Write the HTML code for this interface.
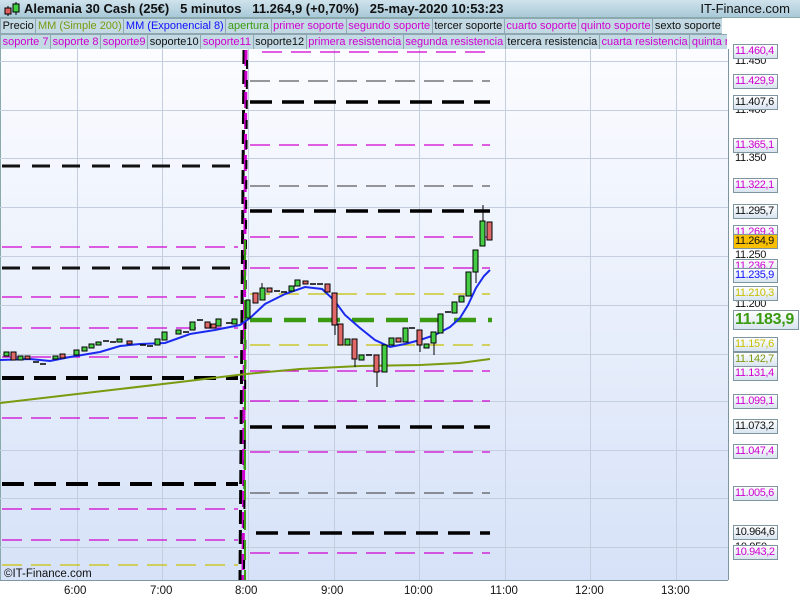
<!DOCTYPE html>
<html><head><meta charset="utf-8">
<style>
*{margin:0;padding:0;box-sizing:border-box}
body{width:800px;height:600px;overflow:hidden;background:#fff;font-family:"Liberation Sans",sans-serif;position:relative}
#hdr{position:absolute;left:0;top:0;width:800px;height:18px;background:linear-gradient(#cfe3ec,#a9c9d8);border-bottom:1px solid #8aa;font-weight:bold;font-size:13px;color:#111;line-height:18px}
.row{position:absolute;left:0;height:16px;display:flex;font-size:11px;line-height:14px;white-space:nowrap;overflow:hidden}
.row span{background:#c3d9e3;border:1px solid #8fa7b0;padding:0 1.6px;margin-right:-1px;height:16px}
.m{color:#d000d0}.k{color:#111}.o{color:#7a9a10}.b{color:#1010ff}.g{color:#3a9a10}
.lab{position:absolute;left:733px;width:45px;height:15px;border:1px solid #7f95a0;background:linear-gradient(#fff,#d8e4f0);font-size:11px;letter-spacing:-0.4px;line-height:13px;padding-left:1px;white-space:nowrap;overflow:hidden}
.pl{position:absolute;left:735px;font-size:11px;letter-spacing:-0.3px;color:#111;line-height:13px}
.t{position:absolute;top:585px;font-size:11.5px;color:#111}
</style></head><body>
<div id="hdr">
<svg style="position:absolute;left:4px;top:1px" width="18" height="16"><line x1="4" y1="5" x2="4" y2="15" stroke="#000"/><rect x="1" y="7" width="6" height="6" fill="#e06060" stroke="#000"/><line x1="12" y1="1" x2="12" y2="14" stroke="#000"/><rect x="9" y="3" width="6" height="8" fill="#40d040" stroke="#000"/></svg>
<span style="position:absolute;left:24px">Alemania 30 Cash (25€)&nbsp;&nbsp;&nbsp;5 minutos&nbsp;&nbsp;&nbsp;11.264,9 (+0,70%)&nbsp;&nbsp;&nbsp;25-may-2020 10:53:23</span>
<span style="position:absolute;right:10px;font-weight:normal">IT-Finance.com</span>
</div>
<div class="row" style="top:18px;left:0">
<span class="k">Precio</span><span class="o">MM (Simple 200)</span><span class="b">MM (Exponencial 8)</span><span class="g">apertura</span><span class="m">primer soporte</span><span class="m">segundo soporte</span><span class="k">tercer soporte</span><span class="m">cuarto soporte</span><span class="m">quinto soporte</span><span class="k">sexto soporte</span>
</div>
<div class="row" style="top:34px;width:727px">
<span class="m">soporte 7</span><span class="m">soporte 8</span><span class="m">soporte9</span><span class="k">soporte10</span><span class="m">soporte11</span><span class="k">soporte12</span><span class="m">primera resistencia</span><span class="m">segunda resistencia</span><span class="k">tercera resistencia</span><span class="m">cuarta resistencia</span><span class="m">quinta resistencia</span>
</div>
<svg style="position:absolute;left:0;top:49px" width="800" height="551" viewBox="0 49 800 551">
<defs><linearGradient id="bg" x1="0" y1="0" x2="0" y2="1"><stop offset="0" stop-color="#fbfcff"/><stop offset="1" stop-color="#d6e2f8"/></linearGradient></defs>
<rect x="0" y="49" width="728" height="531" fill="url(#bg)"/>
<line x1="0.5" y1="49" x2="0.5" y2="580" stroke="#8aa"/>
<g stroke="#c4cede" stroke-width="1">
<line x1="0" y1="61.5" x2="728" y2="61.5"/><line x1="0" y1="110.5" x2="728" y2="110.5"/><line x1="0" y1="158.5" x2="728" y2="158.5"/><line x1="0" y1="207.5" x2="728" y2="207.5"/><line x1="0" y1="256.5" x2="728" y2="256.5"/><line x1="0" y1="305.5" x2="728" y2="305.5"/><line x1="0" y1="354.5" x2="728" y2="354.5"/><line x1="0" y1="401.5" x2="728" y2="401.5"/><line x1="0" y1="450.5" x2="728" y2="450.5"/><line x1="0" y1="498.5" x2="728" y2="498.5"/><line x1="0" y1="547.5" x2="728" y2="547.5"/>
<line x1="77.5" y1="49" x2="77.5" y2="580"/><line x1="162.5" y1="49" x2="162.5" y2="580"/><line x1="248.5" y1="49" x2="248.5" y2="580"/><line x1="334.5" y1="49" x2="334.5" y2="580"/><line x1="419.5" y1="49" x2="419.5" y2="580"/><line x1="505.5" y1="49" x2="505.5" y2="580"/><line x1="590.5" y1="49" x2="590.5" y2="580"/><line x1="676.5" y1="49" x2="676.5" y2="580"/>
</g>
<g fill="none">
<line x1="2" y1="166" x2="238" y2="166" stroke="#111" stroke-width="3" stroke-dasharray="18,12"/>
<line x1="2" y1="268" x2="238" y2="268" stroke="#111" stroke-width="3" stroke-dasharray="18,12"/>
<line x1="2" y1="378" x2="238" y2="378" stroke="#000" stroke-width="4" stroke-dasharray="22,10"/>
<line x1="2" y1="484" x2="238" y2="484" stroke="#000" stroke-width="4" stroke-dasharray="22,10"/>
<g stroke="#d000d0" stroke-width="1.3" stroke-dasharray="20,9">
<line x1="2" y1="247" x2="238" y2="247"/><line x1="2" y1="297" x2="238" y2="297"/><line x1="2" y1="328" x2="238" y2="328"/><line x1="2" y1="357" x2="238" y2="357"/><line x1="2" y1="418" x2="238" y2="418"/><line x1="2" y1="509" x2="238" y2="509"/><line x1="2" y1="540" x2="238" y2="540"/>
</g>
<line x1="2" y1="565" x2="238" y2="565" stroke="#c8c000" stroke-width="1.3" stroke-dasharray="20,9"/>
<g stroke="#d000d0" stroke-width="1.3" stroke-dasharray="20,9">
<line x1="262" y1="52" x2="490" y2="52"/><line x1="250" y1="145" x2="490" y2="145"/><line x1="250" y1="237" x2="490" y2="237"/><line x1="250" y1="268" x2="490" y2="268"/><line x1="250" y1="371" x2="490" y2="371"/><line x1="250" y1="401" x2="490" y2="401"/><line x1="250" y1="452" x2="490" y2="452"/><line x1="250" y1="553" x2="490" y2="553"/>
</g>
<g stroke="#333" stroke-width="1" stroke-dasharray="20,9">
<line x1="250" y1="81" x2="490" y2="81"/><line x1="250" y1="186" x2="490" y2="186"/><line x1="250" y1="493" x2="490" y2="493"/>
</g>
<g stroke="#000" stroke-width="3.5" stroke-dasharray="22,10">
<line x1="250" y1="102" x2="490" y2="102"/><line x1="250" y1="211" x2="490" y2="211"/><line x1="250" y1="427" x2="490" y2="427"/><line x1="256" y1="533" x2="490" y2="533"/>
</g>
<g stroke="#c8c000" stroke-width="1.3" stroke-dasharray="20,9">
<line x1="250" y1="294" x2="490" y2="294"/><line x1="250" y1="345" x2="490" y2="345"/>
</g>
<line x1="250" y1="320" x2="492" y2="320" stroke="#3a9a10" stroke-width="4.5" stroke-dasharray="22,12"/>
<line x1="244" y1="50" x2="240" y2="580" stroke="#000" stroke-width="3" stroke-dasharray="14,6"/>
<line x1="246" y1="50" x2="243" y2="580" stroke="#d000d0" stroke-width="3" stroke-dasharray="16,5"/>
<line x1="247" y1="60" x2="244" y2="580" stroke="#000" stroke-width="2" stroke-dasharray="9,11"/>
<line x1="245" y1="240" x2="245" y2="580" stroke="#3a9a10" stroke-width="2" stroke-dasharray="20,10"/>
<polyline points="0,403 60,396 120,389 180,382 246,374 300,369 360,366 420,365 460,363 490,359" stroke="#7a9a10" stroke-width="2"/>
<polyline points="0,360 30,359 50,361 70,357 100,352 120,346 140,344 165,343 190,334 215,330 240,325 250,318 265,304 285,294 305,287 322,289 334,300 345,315 360,328 375,340 390,347 405,344 420,340 435,335 450,327 460,318 468,305 476,288 484,276 490,270" stroke="#1a2aee" stroke-width="2"/>
</g>
<g stroke="#000" stroke-width="1">
<g fill="#44cc44">
<rect x="4" y="352" width="5" height="4"/><rect x="18" y="356" width="5" height="4"/><rect x="53" y="356" width="5" height="3"/><rect x="74" y="350" width="5" height="5"/><rect x="82" y="347" width="5" height="4"/><rect x="89" y="344" width="5" height="4"/><rect x="96" y="342" width="5" height="3"/><rect x="117" y="339" width="5" height="3"/><rect x="155" y="339" width="5" height="6"/><rect x="162" y="332" width="5" height="8"/><rect x="176" y="330" width="5" height="4"/><rect x="190" y="322" width="5" height="8"/><rect x="216" y="319" width="5" height="7"/><rect x="232" y="319" width="5" height="5"/>
<rect x="246" y="300" width="4" height="18"/><rect x="260" y="288" width="5" height="12"/><rect x="289" y="286" width="5" height="5"/><rect x="295" y="280" width="5" height="6"/>
<rect x="345" y="339" width="5" height="6"/><rect x="359" y="355" width="5" height="5"/><rect x="382" y="345" width="5" height="27"/><rect x="389" y="338" width="5" height="7"/><rect x="403" y="328" width="5" height="14"/><rect x="424" y="344" width="5" height="4"/><rect x="431" y="332" width="5" height="11"/><rect x="438" y="314" width="5" height="19"/><rect x="452" y="302" width="5" height="11"/><rect x="459" y="296" width="5" height="6"/><rect x="466" y="272" width="5" height="24"/><rect x="473" y="250" width="5" height="22"/><rect x="480" y="221" width="5" height="25"/>
</g>
<g fill="#e06868">
<rect x="11" y="352" width="5" height="8"/><rect x="25" y="356" width="5" height="3"/><rect x="60" y="354" width="5" height="4"/><rect x="127" y="341" width="5" height="3"/><rect x="205" y="322" width="5" height="6"/><rect x="211" y="324" width="5" height="4"/>
<rect x="253" y="293" width="5" height="10"/><rect x="267" y="288" width="5" height="4"/><rect x="303" y="281" width="5" height="3"/><rect x="325" y="284" width="5" height="8"/><rect x="332" y="293" width="5" height="32"/><rect x="338" y="324" width="5" height="21"/><rect x="352" y="339" width="5" height="20"/><rect x="374" y="355" width="5" height="17"/><rect x="396" y="338" width="5" height="4"/><rect x="417" y="330" width="5" height="15"/><rect x="487" y="222" width="5" height="18"/>
</g>
<g stroke-width="1.5">
<line x1="33" y1="362" x2="39" y2="362"/><line x1="40" y1="364" x2="46" y2="364"/><line x1="103" y1="341" x2="109" y2="341"/><line x1="110" y1="342" x2="116" y2="342"/><line x1="140" y1="345" x2="146" y2="345"/><line x1="147" y1="346" x2="153" y2="346"/><line x1="183" y1="332" x2="189" y2="332"/><line x1="197" y1="320" x2="203" y2="320"/><line x1="226" y1="323" x2="232" y2="323"/>
<line x1="274" y1="291" x2="280" y2="291"/><line x1="281" y1="292" x2="287" y2="292"/><line x1="310" y1="284" x2="316" y2="284"/><line x1="317" y1="284" x2="323" y2="284"/><line x1="366" y1="355" x2="372" y2="355"/><line x1="409" y1="328" x2="415" y2="328"/><line x1="445" y1="312" x2="451" y2="312"/>
</g>
<g>
<line x1="377" y1="372" x2="377" y2="387"/><line x1="335" y1="325" x2="335" y2="335"/><line x1="355" y1="359" x2="355" y2="367"/><line x1="420" y1="345" x2="420" y2="352"/><line x1="434" y1="343" x2="434" y2="355"/><line x1="476" y1="272" x2="476" y2="283"/><line x1="483" y1="205" x2="483" y2="221"/><line x1="262" y1="283" x2="262" y2="288"/>
</g>
</g>
<line x1="728.5" y1="49" x2="728.5" y2="580" stroke="#7f95a0"/>
<line x1="0" y1="580.5" x2="728" y2="580.5" stroke="#7f95a0"/>
<text x="4" y="577" font-family="Liberation Sans" font-size="11.5" fill="#111">©IT-Finance.com</text>
</svg>
<div class="pl" style="top:55px">11.450</div>
<div class="pl" style="top:104px">11.400</div>
<div class="pl" style="top:152px">11.350</div>
<div class="pl" style="top:249px">11.250</div>
<div class="pl" style="top:298px">11.200</div>
<div class="pl" style="top:492px">11.000</div>
<div class="pl" style="top:541px">10.950</div>
<div class="lab m" style="top:44px">11.460,4</div>
<div class="lab m" style="top:74px">11.429,9</div>
<div class="lab k" style="top:95px">11.407,6</div>
<div class="lab m" style="top:138px">11.365,1</div>
<div class="lab m" style="top:178px">11.322,1</div>
<div class="lab k" style="top:204px">11.295,7</div>
<div class="lab m" style="top:225px">11.269,3</div>
<div class="lab k" style="top:234px;background:#f8c000">11.264,9</div>
<div class="lab m" style="top:259px">11.236,7</div>
<div class="lab b" style="top:268px">11.235,9</div>
<div class="lab" style="top:286px;color:#c8c000">11.210,3</div>
<div class="lab g" style="top:310px;width:66px;height:20px;font-size:16px;letter-spacing:-0.3px;font-weight:bold;line-height:18px">11.183,9</div>
<div class="lab" style="top:337px;color:#c8c000">11.157,6</div>
<div class="lab o" style="top:352px">11.142,7</div>
<div class="lab m" style="top:366px">11.131,4</div>
<div class="lab m" style="top:394px">11.099,1</div>
<div class="lab k" style="top:419px">11.073,2</div>
<div class="lab m" style="top:444px">11.047,4</div>
<div class="lab m" style="top:486px">11.005,6</div>
<div class="lab k" style="top:525px">10.964,6</div>
<div class="lab m" style="top:545px">10.943,2</div>
<div class="t" style="left:64px">6:00</div><div class="t" style="left:150px">7:00</div><div class="t" style="left:235px">8:00</div><div class="t" style="left:321px">9:00</div><div class="t" style="left:404px">10:00</div><div class="t" style="left:490px">11:00</div><div class="t" style="left:575px">12:00</div><div class="t" style="left:661px">13:00</div>
</body></html>
